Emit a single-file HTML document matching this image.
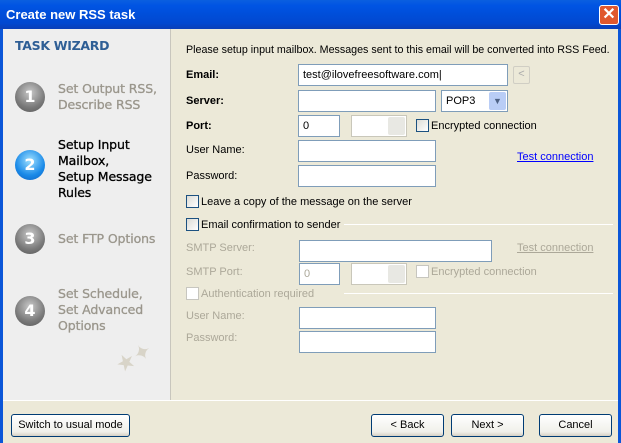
<!DOCTYPE html>
<html><head><style>
*{box-sizing:border-box;margin:0;padding:0}
body{width:621px;height:443px;overflow:hidden;background:#ece9d8;font-family:"Liberation Sans",sans-serif;font-size:11px;color:#000;position:relative}
.a{position:absolute;white-space:nowrap}
.title{left:0;top:0;width:621px;height:29px;background:linear-gradient(#0a5fe0,#0054e3 20%,#0148d0 80%,#0a3fb8);color:#fff;font-weight:bold;font-size:13px;padding:7px 0 0 6px}
.close{left:599px;top:5px;width:20px;height:20px;background:#e0582e;border:1px solid #fff;border-radius:3px;color:#fff;font-size:16px;text-align:center;line-height:17px;font-weight:bold}
.lb{left:0;top:29px;width:3px;height:414px;background:#0b56d8}
.rb{left:618px;top:29px;width:3px;height:414px;background:#0b56d8}
.left{left:3px;top:29px;width:168px;height:371px;background:#eeeeee;border-right:1px solid #c8c6bd}
.tw{left:15px;top:38px;font-family:"DejaVu Sans",sans-serif;font-weight:bold;font-size:12.5px;color:#2e5e95;letter-spacing:-.3px}
.step{left:58px;font-family:"DejaVu Sans",sans-serif;font-size:12.5px;line-height:16px;color:#9a968c;letter-spacing:-.1px;-webkit-text-stroke:.3px}
.circ{left:15px;width:30px;height:30px;border-radius:50%;background:radial-gradient(circle at 50% 35%,#c9c9c9,#7a7a7a 60%,#555);color:#fff;font-family:"DejaVu Sans",sans-serif;font-weight:bold;font-size:16px;text-align:center;line-height:30px}
.blue{background:radial-gradient(circle at 50% 35%,#9fe0ff,#1a8ae8 60%,#0c5fc0)}
.lbl{left:186px}
.b{font-weight:bold}
.in{background:#fff;border:1px solid #7f9db9;height:22px;padding:4px 4px;font-size:11px}
.dis{color:#aca899}
.cb{width:13px;height:13px;border:1px solid #1c5180;background:linear-gradient(135deg,#dcdcd6,#fff)}
.cbd{border-color:#c7c6bf;background:#fff}
.combo{height:22px;border:1px solid #c9c7ba;background:#fff}
.arr{position:absolute;right:1px;top:1px;width:17px;height:18px;border-radius:2px;background:#e8e8e3}
.link{color:#0000ff;text-decoration:underline}
.line{height:1px;background:#aca899;border-bottom:1px solid #fff}
.btn{height:23px;border:1px solid #003c74;border-radius:3px;background:linear-gradient(#fff,#f0f0ea 80%,#d6d0c5);text-align:center;line-height:21px;font-size:11px}
</style></head><body>
<div class="a title">Create new RSS task</div>
<div class="a close">✕</div>
<div class="a lb"></div><div class="a rb"></div>
<div class="a left"></div>
<div class="a tw">TASK WIZARD</div>
<div class="a circ" style="top:82px">1</div>
<div class="a step" style="top:81px">Set Output RSS,<br>Describe RSS</div>
<div class="a circ blue" style="top:150px">2</div>
<div class="a step" style="top:137px;color:#000">Setup Input<br>Mailbox,<br>Setup Message<br>Rules</div>
<div class="a circ" style="top:224px">3</div>
<div class="a step" style="top:231px">Set FTP Options</div>
<div class="a circ" style="top:296px">4</div>
<div class="a step" style="top:286px">Set Schedule,<br>Set Advanced<br>Options</div>
<div class="a" style="left:115px;top:345px;color:#d8d4c8;font-size:22px;transform:rotate(-30deg)">★✦</div>

<div class="a" style="left:186px;top:44px;font-size:10.7px">Please setup input mailbox. Messages sent to this email will be converted into RSS Feed.</div>
<div class="a lbl b" style="top:69px">Email:</div>
<div class="a in" style="left:298px;top:64px;width:210px">test@ilovefreesoftware.com|</div>
<div class="a" style="left:513px;top:66px;width:17px;height:18px;border:1px solid #d0cec4;border-radius:2px;color:#aaa;text-align:center;line-height:15px">&lt;</div>
<div class="a lbl b" style="top:95px">Server:</div>
<div class="a in" style="left:298px;top:90px;width:138px"></div>
<div class="a combo" style="left:441px;top:90px;width:67px;border-color:#7f9db9;padding:4px 4px">POP3<div class="arr" style="background:#b9cdf6;color:#4d6185;text-align:center;font-size:9px;line-height:18px">▼</div></div>
<div class="a lbl b" style="top:120px">Port:</div>
<div class="a in" style="left:298px;top:115px;width:42px">0</div>
<div class="a combo" style="left:351px;top:115px;width:56px"><div class="arr"></div></div>
<div class="a cb" style="left:416px;top:119px"></div>
<div class="a" style="left:431px;top:120px">Encrypted connection</div>
<div class="a lbl" style="top:144px">User Name:</div>
<div class="a in" style="left:298px;top:140px;width:138px"></div>
<div class="a link" style="left:517px;top:151px">Test connection</div>
<div class="a lbl" style="top:170px">Password:</div>
<div class="a in" style="left:298px;top:165px;width:138px"></div>
<div class="a cb" style="left:186px;top:195px"></div>
<div class="a" style="left:201px;top:196px">Leave a copy of the message on the server</div>
<div class="a cb" style="left:186px;top:218px"></div>
<div class="a" style="left:201px;top:219px">Email confirmation to sender</div>
<div class="a line" style="left:344px;top:224px;width:269px"></div>
<div class="a lbl dis" style="top:242px">SMTP Server:</div>
<div class="a in" style="left:299px;top:240px;width:193px"></div>
<div class="a dis" style="left:517px;top:242px;text-decoration:underline">Test connection</div>
<div class="a lbl dis" style="top:266px">SMTP Port:</div>
<div class="a in dis" style="left:299px;top:263px;width:41px">0</div>
<div class="a combo" style="left:351px;top:263px;width:56px"><div class="arr"></div></div>
<div class="a cb cbd" style="left:416px;top:265px"></div>
<div class="a dis" style="left:431px;top:266px">Encrypted connection</div>
<div class="a cb cbd" style="left:186px;top:287px"></div>
<div class="a dis" style="left:201px;top:288px">Authentication required</div>
<div class="a line" style="left:344px;top:293px;width:269px"></div>
<div class="a lbl dis" style="top:310px">User Name:</div>
<div class="a in" style="left:299px;top:307px;width:137px"></div>
<div class="a lbl dis" style="top:332px">Password:</div>
<div class="a in" style="left:299px;top:331px;width:137px"></div>

<div class="a line" style="left:3px;top:400px;width:615px"></div>
<div class="a btn" style="left:11px;top:414px;width:119px">Switch to usual mode</div>
<div class="a btn" style="left:371px;top:414px;width:73px">&lt; Back</div>
<div class="a btn" style="left:451px;top:414px;width:73px">Next &gt;</div>
<div class="a btn" style="left:539px;top:414px;width:73px">Cancel</div>
</body></html>
